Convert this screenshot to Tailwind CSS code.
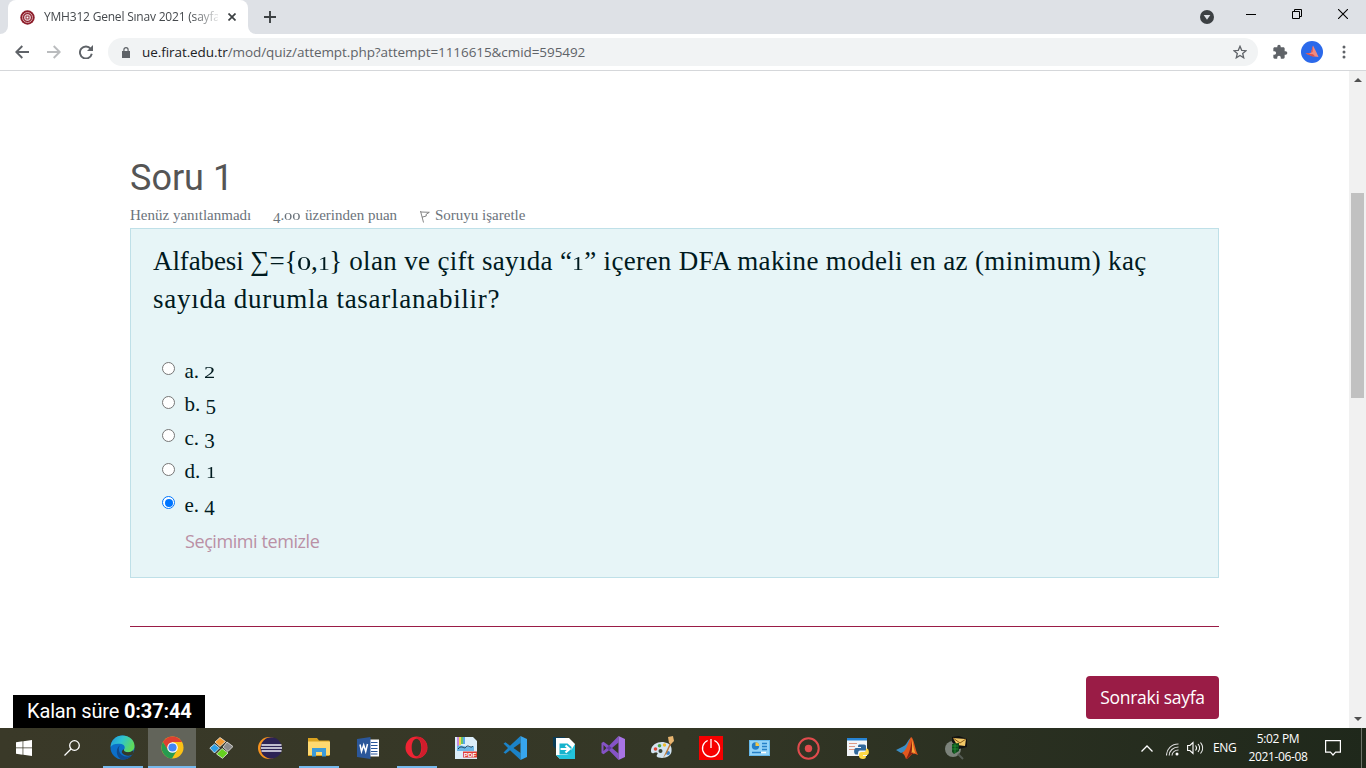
<!DOCTYPE html>
<html lang="tr">
<head>
<meta charset="utf-8">
<title>YMH312 Genel Sınav 2021</title>
<script src="https://cdn.jsdelivr.net/npm/@tailwindcss/browser@4"></script>
</head>
<body class="w-[1366px] h-[768px] overflow-hidden bg-white flex flex-col font-['Open_Sans',sans-serif] whitespace-nowrap">

<!-- tab strip -->
<header class="h-[34px] shrink-0 bg-[#dee1e6] flex pl-[8px]">
  <div class="relative w-[240px] h-[34px] bg-white rounded-t-[8px] flex items-center pl-[12px]">
    <div class="absolute bottom-0 -left-[8px] size-[8px] bg-white"><div class="size-full bg-[#dee1e6] rounded-br-[8px]"></div></div>
    <div class="absolute bottom-0 -right-[8px] size-[8px] bg-white"><div class="size-full bg-[#dee1e6] rounded-bl-[8px]"></div></div>
    <svg class="size-[15px]" viewBox="0 0 15 15"><circle cx="7.5" cy="7.5" r="7.2" fill="#8d1f2c"/><circle cx="7.5" cy="7.5" r="5" fill="none" stroke="#d9a5aa" stroke-width="1"/><circle cx="7.5" cy="7.5" r="3.200" fill="#fff"/><rect x="6" y="6" width="3" height="3" fill="none" stroke="#8d1f2c"/></svg>
    <div class="ml-[9px] w-[174px] text-[12px] leading-[18px] text-[#45494d] tracking-[-0.2px] [mask-image:linear-gradient(to_right,#000_148px,rgba(0,0,0,.15)_174px)]">YMH312 Genel Sınav 2021 (sayfa</div>
    <svg class="ml-[10px] size-[8px]" viewBox="0 0 8 8"><path d="M.5.5l7 7M7.500.5l-7 7" stroke="#3c4043" stroke-width="1.700"/></svg>
  </div>
  <svg class="ml-[16px] mt-[11px] size-[12px]" viewBox="0 0 12 12"><path d="M6 0v12M0 6h12" stroke="#3c4043" stroke-width="1.900"/></svg>
  <div class="ml-auto flex">
    <svg class="mt-[10px] size-[14px]" viewBox="0 0 14 14"><circle cx="7" cy="7" r="7" fill="#3c4043"/><path d="M3.700 5h6.600L7 9.800z" fill="#dee1e6"/></svg>
    <svg class="ml-[32px] mt-[14px] w-[10px] h-[1px]" viewBox="0 0 10 1"><path d="M0 0h10v1H0z"/></svg>
    <svg class="ml-[36px] mt-[9px] size-[10px]" viewBox="0 0 10 10" fill="none" stroke="#000"><path d="M.5 2.500h7v7h-7zM2.500 2.500v-2h7v7h-2"/></svg>
    <svg class="ml-[36px] mt-[9px] mr-[18px] size-[10px]" viewBox="0 0 10 10" fill="none" stroke="#000" stroke-width="1.100"><path d="M0 0l10 10M10 0L0 10"/></svg>
  </div>
</header>

<!-- toolbar -->
<nav class="h-[37px] shrink-0 border-b border-[#d5d7da] flex items-center pl-[15px]">
  <svg class="size-[14px]" viewBox="0 0 14 14" fill="none" stroke="#5f6368" stroke-width="1.900"><path d="M14 7H1.500M7.300 1L1.300 7l6 6"/></svg>
  <svg class="ml-[18px] size-[14px]" viewBox="0 0 14 14" fill="none" stroke="#babcbe" stroke-width="1.900"><path d="M0 7h12.500M6.700 1l6 6-6 6"/></svg>
  <svg class="ml-[18px] size-[14px]" viewBox="0 0 14 14"><path d="M11.700 3.800A6 6 0 1 0 12.800 8.800" fill="none" stroke="#5f6368" stroke-width="1.900"/><path d="M14 0v6H8z" fill="#5f6368"/></svg>
  <div class="ml-[15px] w-[1150px] h-[28px] rounded-full bg-[#f1f3f4] flex items-center pl-[14px] pr-[11px]">
    <svg class="w-[8px] h-[11px]" viewBox="0 0 8 11"><path d="M0 4h8v7H0z" fill="#5f6368"/><path d="M1.900 4.500V2.700a2.100 2.100 0 0 1 4.200 0v1.800" fill="none" stroke="#5f6368" stroke-width="1.200"/></svg>
    <span class="ml-[12px] text-[13.500px] leading-[20px] tracking-[-0.07px] text-[#5f6368]"><span class="text-[#202124]">ue.firat.edu.tr</span>/mod/quiz/attempt.php?attempt=1116615&amp;cmid=595492</span>
    <svg class="ml-auto size-[14px]" viewBox="0 0 14 14" fill="none" stroke="#5f6368" stroke-width="1.300"><path d="M7 1.300l1.700 4 4.300.4-3.300 2.800 1 4.300L7 10.500l-3.700 2.300 1-4.300L1 5.700l4.300-.4z"/></svg>
  </div>
  <svg class="ml-[14px] size-[16px]" viewBox="0 0 24 24"><path fill="#5f6368" d="M20.500 11H19V7c0-1.100-.9-2-2-2h-4V3.500a2.500 2.500 0 0 0-5 0V5H4c-1.100 0-2 .9-2 2v3.800h1.500a2.700 2.700 0 0 1 0 5.400H2V20c0 1.100.9 2 2 2h3.800v-1.500a2.700 2.700 0 0 1 5.400 0V22H17c1.100 0 2-.9 2-2v-4h1.500a2.500 2.500 0 0 0 0-5z"/></svg>
  <svg class="ml-[13px] size-[22px]" viewBox="0 0 22 22"><circle cx="11" cy="11" r="11" fill="#2b69ea"/><path d="M12 4.500l3.500 7 2 4.500-5.500-.8-7.500-2.700 5.500-.8z" fill="#f08a80"/><path d="M12 4.500l-.5 6.500-4 1.800 4.500.4 2 2-2 .5-7.500-3.200 5.500-.8z" fill="#d9514e"/></svg>
  <svg class="ml-[19px] w-[4px] h-[14px]" viewBox="0 0 4 14" fill="#5f6368"><circle cx="2" cy="2" r="1.500"/><circle cx="2" cy="7" r="1.500"/><circle cx="2" cy="12" r="1.500"/></svg>
</nav>

<!-- page -->
<main class="h-[657px] shrink-0 flex relative">
  <div class="w-[1349px] pl-[130px] pr-[130px] flex flex-col">
    <h1 class="mt-[85px] h-[43px] font-['Roboto'] text-[36px] leading-[44px] text-[#555]">Soru 1</h1>
    <div class="mt-[5px] h-[24px] flex font-['Liberation_Serif',serif] text-[15px] leading-[22px] text-[#6b737b]">
      <span class="w-[143px]">Henüz yanıtlanmadı</span>
      <span class="w-[147px]"><span class="inline-block translate-y-[3px]">4</span>.<span class="inline-block origin-left scale-x-150 mr-[6px] leading-none text-[11px]">00</span> üzerinden puan</span>
      <svg class="mt-[6px] w-[10px] h-[13px]" viewBox="0 0 10 13" fill="none" stroke="#777" stroke-width=".9"><path d="M.5 1l3 11.500M.8 2l8.500.3L6 4.500l.3 1.500-4.300 1.200"/></svg>
      <span class="ml-[5px]">Soruyu işaretle</span>
    </div>
    <section class="w-[1089px] h-[350px] shrink-0 bg-[#e7f5f7] border border-[#bfe0e8] pl-[22px] flex flex-col text-[#001a1e]">
      <div class="mt-[13px] font-['Liberation_Serif',serif] text-[27px] leading-[38px]">
        <p class="h-[38px]"><span class="tracking-[-0.1px]">Alfabesi ∑={</span><span class="inline-block origin-left scale-x-150 mr-[4px] leading-none text-[19px]">0</span>,<span class="inline-block origin-left scale-x-125 mr-[2px] leading-none text-[19px]">1</span>}<span class="tracking-[0.34px]"> olan ve çift sayıda “<span class="inline-block origin-left scale-x-125 mr-[2px] leading-none text-[19px]">1</span>” içeren DFA makine modeli en az (minimum) kaç</span></p>
        <p class="h-[38px] tracking-[0.73px]">sayıda durumla tasarlanabilir?</p>
      </div>
      <div class="mt-[39px] pl-[9px] font-['Liberation_Serif',serif] text-[21px]">
        <label class="h-[33.500px] flex"><span class="mt-[5px] size-[13px] rounded-full border border-[#767676] bg-white"></span><span class="-mt-[2px] ml-[9.500px] leading-[33px]">a. <span class="inline-block origin-left scale-x-140 leading-none text-[16px]">2</span></span></label>
        <label class="h-[33.500px] flex"><span class="mt-[5px] size-[13px] rounded-full border border-[#767676] bg-white"></span><span class="-mt-[3px] ml-[9.500px] leading-[33px]">b. <span class="inline-block translate-y-[3px]">5</span></span></label>
        <label class="h-[33.500px] flex"><span class="mt-[5px] size-[13px] rounded-full border border-[#767676] bg-white"></span><span class="-mt-[2px] ml-[9.500px] leading-[33px]">c. <span class="inline-block translate-y-[3px]">3</span></span></label>
        <label class="h-[33.500px] flex"><span class="mt-[5px] size-[13px] rounded-full border border-[#767676] bg-white"></span><span class="-mt-[3px] ml-[9.500px] leading-[33px]">d. <span class="inline-block origin-left scale-x-125 leading-none text-[16px]">1</span></span></label>
        <label class="h-[33.500px] flex"><span class="mt-[5px] size-[13px] rounded-full border border-[#0075ff] bg-white flex items-center justify-center"><span class="size-[8px] rounded-full bg-[#0075ff]"></span></span><span class="-mt-[2px] ml-[9.500px] leading-[33px]">e. <span class="inline-block translate-y-[3px]">4</span></span></label>
      </div>
      <div class="mt-[4px] pl-[32px] text-[18px] tracking-[-0.42px] leading-[24px] text-[#ba90a5]"><span>Seçimimi temizle</span></div>
    </section>
    <div class="mt-[48px] w-[1089px] h-px shrink-0 bg-[#9a1c46]"></div>
    <button class="mt-[49px] ml-[956px] w-[133px] h-[43px] shrink-0 rounded-[4px] bg-[#9a1c46] text-white text-[17.500px] tracking-[-0.3px]"><span>Sonraki sayfa</span></button>
  </div>
  <div class="w-[17px] bg-[#f1f1f1] flex flex-col items-center">
    <svg class="mt-[7px] w-[8px] h-[4px]" viewBox="0 0 8 4"><path d="M0 4l4-4 4 4z" fill="#505050"/></svg>
    <div class="mt-[111px] w-[13px] h-[205px] bg-[#c1c1c1]"></div>
    <svg class="mt-auto mb-[7px] w-[8px] h-[4px]" viewBox="0 0 8 4"><path d="M0 0l4 4 4-4z" fill="#505050"/></svg>
  </div>
  <div class="absolute left-[13px] bottom-0 w-[192px] h-[33px] bg-black text-white font-['Roboto'] text-[20px] leading-[32px] pl-[14px] tracking-[-0.15px]"><span>Kalan süre</span> <b>0:37:44</b></div>
</main>

<!-- taskbar -->
<footer class="h-[40px] shrink-0 bg-linear-to-r from-[#3a3928] via-[#343726] to-[#1f281b] flex text-white">
  <div class="w-[48px] flex items-center justify-center"><svg class="size-[16px]" viewBox="0 0 16 16" fill="#fff"><path d="M0 2.200l6.600-.9v6.300H0zM7.300 1.200L16 0v7.600H7.300zM0 8.300h6.600v6.400L0 13.800zM7.300 8.300H16V16l-8.700-1.200z"/></svg></div>
  <div class="w-[50px] flex items-center pl-[16px]"><svg class="size-[16px]" viewBox="0 0 16 16" fill="none" stroke="#fff" stroke-width="1.300"><circle cx="10.500" cy="5.500" r="4.800"/><path d="M7 9L.5 15.500"/></svg></div>
  <div class="w-[49px] flex items-center justify-center border-b-2 border-transparent bg-[linear-gradient(#76b9ed,#76b9ed)] [background-size:40px_2px] bg-no-repeat [background-position:center_bottom] [background-origin:border-box]">
    <svg class="size-[25px]" viewBox="0 0 25 25"><defs><linearGradient id="eg" x1="0" y1="0" x2="1" y2=".4"><stop offset="0" stop-color="#2196dc"/><stop offset=".5" stop-color="#2fc4cf"/><stop offset="1" stop-color="#5fd95c"/></linearGradient></defs><circle cx="12.500" cy="12.500" r="12" fill="#0c6fc8"/><path d="M.6 12C1 5 6 .5 12.500.5S24.500 5 24.500 11c0 4-3 6.300-6.500 6.300-3 0-4.500-1.300-4-2.600 1.400-1.700 1-4.700-2.500-5.700C7 8 2 9 .6 12z" fill="url(#eg)"/><path d="M10.500 10C7 13 9 21 16 21.500c2.500.2 4.500-.5 6.400-2-2.400 4-6.900 6-11.400 4.800C6 22 5 13 10.500 10z" fill="#104a8c"/><path d="M14 14.500c-.5 1.300 1 2.800 4 2.800 2 0 4-.8 5.200-2 .6 1.300.4 2.700-.6 4-3 2.200-8 2-10.300-1-1.200-1.800.2-3.800 1.700-3.800z" fill="#34382a"/></svg>
  </div>
  <div class="ml-px w-[48px] flex items-center justify-center border-b-2 border-[#76b9ed] bg-[#62645a]">
    <svg class="size-[23px]" viewBox="0 0 24 24"><circle cx="12" cy="12" r="11.500" fill="#fbc116"/><path d="M2 6.300A11.500 11.500 0 0 1 22 6.300H12L7 15z" fill="#dd4031"/><path d="M2 6.300a11.500 11.500 0 0 0 9.500 17.200L16.500 15 7.200 14.700z" fill="#269b50"/><circle cx="12" cy="12" r="5.500" fill="#fff"/><circle cx="12" cy="12" r="4.300" fill="#4285f4"/></svg>
  </div>
  <div class="w-[49px] flex items-center justify-center"><svg class="size-[24px]" viewBox="0 0 24 24" stroke="#fff" stroke-width=".7"><path d="M11 1.500l5.500 4-5.500 5L6 6z" fill="#f39a32"/><path d="M18 6l6 4.500-5 5-5-4.500z" fill="#8b8b8b"/><path d="M5.500 8l5 4-5 5L.8 12z" fill="#2f9fe5"/><path d="M13 12.500l6 4.500-5.500 5.300L7.500 18z" fill="#65d020"/></svg></div>
  <div class="w-[49px] flex items-center justify-center"><svg class="size-[24px]" viewBox="0 0 24 24"><circle cx="11" cy="12" r="11" fill="#f7941e"/><circle cx="13.200" cy="12" r="10.700" fill="#2c2255"/><path d="M3.500 9H23.500M3 12h21M3.500 15H23.500" stroke="#eeeef8" stroke-width="1.700"/></svg></div>
  <div class="w-[49px] flex items-center justify-center border-b-2 border-transparent bg-[linear-gradient(#76b9ed,#76b9ed)] [background-size:40px_2px] bg-no-repeat [background-position:center_bottom] [background-origin:border-box]">
    <svg class="w-[22px] h-[20px]" viewBox="0 0 22 20"><path d="M0 1h9l2 2.500h10.500V19H0z" fill="#dba320"/><path d="M0 4.500h22V18H0z" fill="#ffd970"/><path d="M4 11h14v8.500h-4V15H8v4.500H4z" fill="#3d9bd8"/></svg>
  </div>
  <div class="w-[49px] flex items-center justify-center"><svg class="w-[22px] h-[22px]" viewBox="0 0 22 22"><path d="M11 2.500h11v17H11z" fill="#fff"/><path d="M14 5.500h6.500M14 8.500h6.500M14 11.500h6.500M14 14.500h6.500M14 17h6.500" stroke="#2b579a"/><path d="M0 2l13.500-2v22L0 20z" fill="#2b579a"/><path d="M3 7.500l1.500 7L6.700 8l2 6.500L10.500 7" fill="none" stroke="#fff" stroke-width="1.500"/></svg></div>
  <div class="w-[49px] flex items-center justify-center border-b-2 border-transparent bg-[linear-gradient(#76b9ed,#76b9ed)] [background-size:40px_2px] bg-no-repeat [background-position:center_bottom] [background-origin:border-box]">
    <svg class="size-[23px]" viewBox="0 0 23 23"><path fill-rule="evenodd" d="M11.500.5a11 11 0 1 1 0 22 11 11 0 0 1 0-22zm0 2.300c-3 0-4.800 4-4.800 8.700s1.800 8.700 4.800 8.700 4.800-4 4.800-8.700-1.800-8.700-4.800-8.700z" fill="#ee2433"/><path d="M15 1.200a11 11 0 0 1 0 20.600c-2 .4-3.500 0-4.500-1 4.500 0 6.500-3.500 6.500-9.300S15 2.500 10.500 2.200c1-1 2.500-1.400 4.500-1z" fill="#d01d2c"/></svg>
  </div>
  <div class="w-[49px] flex items-center justify-center"><svg class="size-[22px]" viewBox="0 0 22 22"><path d="M0 0h18l4 4v18H0z" fill="#dceefa"/><path d="M2 0h2v9H2z" fill="#c98be0"/><path d="M4 0h2v8H4z" fill="#f7d84b"/><path d="M6 0h2v7H6z" fill="#6bc36a"/><path d="M8 0h2v7H8z" fill="#58a7e8"/><path d="M2 9c7-2 9 3 17 0v5H2z" fill="#6db8e6"/><path d="M3 12c4-5 6 1 8-2s5 2 7-1" fill="none" stroke="#163a5a"/><path d="M8 14.500h14v6H8z" fill="#e13c36"/><text x="8.800" y="20" font-family="Liberation Sans" font-weight="bold" font-size="6.200" fill="#fff">PDF</text></svg></div>
  <div class="w-[49px] flex items-center justify-center"><svg class="size-[24px]" viewBox="0 0 24 24"><path d="M17.500 0L7 9.800 2.500 6.300.5 7.500 5 12 .5 16.500l2 1.200L7 14.200 17.500 24V17L10.500 12l7-5z" fill="#1b83c9"/><path d="M17.500 0L24 3v18l-6.500 3z" fill="#37a5ed"/></svg></div>
  <div class="w-[49px] flex items-center justify-center"><svg class="w-[22px] h-[24px]" viewBox="0 0 22 24"><path d="M0 1h12v13H4L0 10z" fill="#0a3b55"/><path d="M3 2h13l6 6v15H7l-4-4z" fill="#fff"/><path d="M22 8v15H7l-4-4h10c4 0 5-5 9-11z" fill="#22c3dc"/><path d="M6.500 7.500h8l4 3.500v5l-3 2.500h-9z" fill="#16b3cd"/><path d="M7.500 13h8M12.500 9.500l4 3.500-4 3.500" fill="none" stroke="#fff" stroke-width="2.200"/></svg></div>
  <div class="w-[49px] flex items-center justify-center"><svg class="size-[24px]" viewBox="0 0 24 24"><path fill-rule="evenodd" d="M17.500 0L8 9.700 2.500 5.800.5 7v10l2 1.200L8 14.300 17.500 24v-6.500L11 12l6.500-5.500zM2.500 9l3 3-3 3z" fill="#8553c6"/><path d="M17.500 0L24 3v18l-6.500 3z" fill="#a874e5"/><path d="M8 9.700l3 2.300-3 2.300-2.500-2.300z" fill="#6538a3"/></svg></div>
  <div class="w-[49px] flex items-center justify-center"><svg class="size-[24px]" viewBox="0 0 24 24"><path d="M1 14C2 8 9 5 15 6.500c6 1 7 5 6.500 9-.6 5-7 7.500-13 6-2.500-.6-2-2.500-1-3.500S6 16 4 17s-3.300-.5-3-3z" fill="#d3e3f0"/><circle cx="5.500" cy="13" r="1.800" fill="#df4536"/><circle cx="9.500" cy="9.700" r="1.800" fill="#4da84a"/><circle cx="14.500" cy="9" r="1.700" fill="#f1bc2e"/><circle cx="18" cy="17" r="2" fill="#3b83cd"/><circle cx="10.500" cy="15" r="2" fill="#3a4338"/><path d="M21 5L13 22l4-5 5-11z" fill="#c27a35"/><path d="M18 1l5-1 1 5-3 3-2-1z" fill="#e8b570"/></svg></div>
  <div class="w-[49px] flex items-center justify-center"><svg class="size-[24px]" viewBox="0 0 24 24"><path d="M0 0h24v24H0z" fill="#f60000"/><path d="M8.700 4.500a8.500 8.500 0 1 0 6.600 0M12 3v9" fill="none" stroke="#fff" stroke-width="1.300"/></svg></div>
  <div class="w-[49px] flex items-center justify-center"><svg class="w-[21px] h-[16px]" viewBox="0 0 21 16"><path d="M0 0h21v16H0z" fill="#65b8eb"/><path d="M1 1h19v14H1z" fill="#93d3f8"/><circle cx="6.500" cy="6" r="3.700" fill="#247fc8"/><path d="M6.500 6V2.300A3.700 3.700 0 0 1 10.200 6z" fill="#f6c747"/><path d="M13 3.500h5M13 6.500h5M13 9.500h5M3 12.500h9" stroke="#2781c7" stroke-width="1.500"/><path d="M12 12.500h5" stroke="#fff" stroke-width="1.500"/></svg></div>
  <div class="w-[49px] flex items-center justify-center"><svg class="size-[23px]" viewBox="0 0 23 23"><circle cx="11.500" cy="11.500" r="10.200" fill="none" stroke="#e04b4d" stroke-width="2"/><circle cx="11.500" cy="11.500" r="3.700" fill="#e04b4d"/></svg></div>
  <div class="w-[49px] flex items-center justify-center"><svg class="w-[22px] h-[23px]" viewBox="0 0 22 23"><path d="M0 1h20v18H0z" fill="#f2f5f8"/><path d="M0 1h20v2.500H0z" fill="#2784d4"/><path d="M2 6.500h8M2 9.500h6M2 12.500h8" stroke="#dd9a87"/><path d="M13 7.500h4c1.500 0 2 .8 2 2v4h-6c-2 0-2 3-2 4H9c-2.500 0-2.500-6.500 0-6.500h5v-1h-3c0-2 .5-2.500 2-2.500z" fill="#30699c"/><path d="M19 11.500h1c2.500.5 2.500 6.500 0 6.500h-4v1h3c0 2-.5 3-3 3s-4-1-4-3c0-3 .5-4 3-4h2c2 0 2-2 2-3.500z" fill="#ffd946"/></svg></div>
  <div class="w-[49px] flex items-center justify-center"><svg class="size-[22px]" viewBox="0 0 22 22"><path d="M0 13l7-3.500C11 8 12 2 15 1l-4 13-6 2z" fill="#3b8dc4"/><path d="M15 0c3 1 4 13 7 18-3-1-5-2-7 0s-3 4-5 4c-1-3-2-5-4-6 5-3 6-11 9-16z" fill="#e2571e"/><path d="M15 0c1 5 0 13-5 22 3 0 4-5 7-5z" fill="#8c2113"/><path d="M15.500 1c1.500 4 2 11 4 15.500-2-1-3-1.500-4-.5 1-5 .7-10 0-15z" fill="#f9a534"/></svg></div>
  <div class="w-[49px] flex items-center justify-center"><svg class="size-[24px]" viewBox="0 0 24 24"><circle cx="9" cy="13" r="8" fill="#7c837b"/><path d="M8 1l7-1 8 3v8l-8 2-7-7z" fill="#111"/><path d="M9 2l13 1-1 7-8-1z" fill="#f2c968"/><path d="M9 2l7 5 6-4" fill="none" stroke="#8a5b18"/><path d="M8 8l7-1v8l-5 3-2-2z" fill="#0f4a1b"/><path d="M8 10h6M8 13h6M11 7v10" stroke="#27a43a" stroke-width=".7"/><path d="M14 18l5 5" stroke="#555c54" stroke-width="2"/></svg></div>

  <div class="ml-auto flex items-center">
    <svg class="w-[12px] h-[7px]" viewBox="0 0 12 7" fill="none" stroke="#fff" stroke-width="1.300"><path d="M.5 6.500L6 1l5.500 5.500"/></svg>
    <svg class="ml-[13px] mt-[2px] size-[13px]" viewBox="0 0 13 13" fill="none" stroke="#ddd" stroke-width="1.100"><path d="M.5 12.500C.5 6 5.500 1 12.500 1M3.200 12.500c0-4.700 4-8.500 9.300-8.500M6 12.500C6 9.300 8.800 7 12.500 7"/><circle cx="11" cy="11" r="1.500" fill="#fff" stroke="none"/></svg>
    <svg class="ml-[8px] w-[17px] h-[14px]" viewBox="0 0 17 14" fill="none" stroke="#fff" stroke-width="1.100"><path d="M.6 4.500h2.300L6 1.500v11l-3.100-3H.6zM8.500 4.500c1.200 1.500 1.200 3.500 0 5M11 3c2 2.300 2 5.700 0 8M13.500 1.500c2.800 3.300 2.800 7.700 0 11"/></svg>
    <span class="ml-[9px] w-[24px] text-[12px] leading-[16px] tracking-[-0.4px]">ENG</span>
    <div class="ml-[7px] w-[68px] text-center text-[12px] leading-[18px] tracking-[-0.35px]"><div>5:02 PM</div><div>2021-06-08</div></div>
    <svg class="ml-[13px] w-[16px] h-[16px]" viewBox="0 0 16 16" fill="none" stroke="#fff" stroke-width="1.200"><path d="M.6.6h14.800v11.600h-4.800L8 15l-2.600-2.800H.6z"/></svg>
    <div class="ml-[20px] w-px h-[40px] bg-[#6d7369] mr-[4px]"></div>
  </div>
</footer>
</body>
</html>
